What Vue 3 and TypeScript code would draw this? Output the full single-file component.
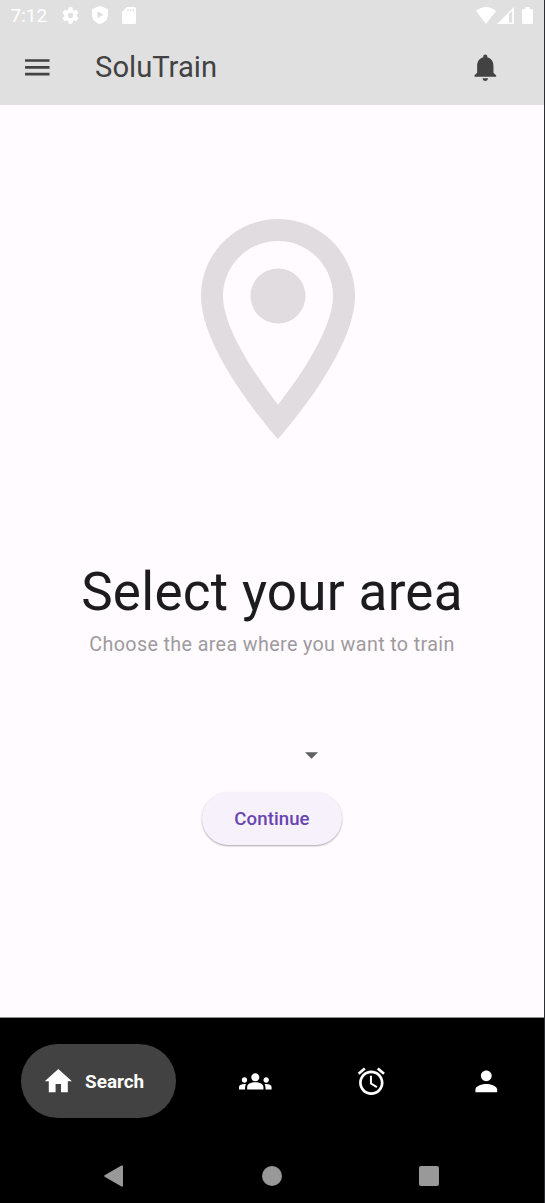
<script setup lang="ts">
interface Tab {
  label: string
  path: string
}

const tabs: Tab[] = [
  {
    label: 'Groups',
    path: 'M12 12.75c1.63 0 3.07.39 4.24.9 1.08.48 1.76 1.56 1.76 2.73V18H6v-1.61c0-1.18.68-2.26 1.76-2.73 1.17-.52 2.61-.91 4.24-.91zM4 13c1.1 0 2-.9 2-2s-.9-2-2-2-2 .9-2 2 .9 2 2 2zm1.13 1.1c-.37-.06-.74-.1-1.13-.1-.99 0-1.93.21-2.78.58C.48 14.9 0 15.62 0 16.43V18h4.500v-1.61c0-.83.23-1.61.63-2.29zM20 13c1.100 0 2-.9 2-2s-.9-2-2-2-2 .9-2 2 .9 2 2 2zm4 3.430c0-.81-.48-1.530-1.220-1.850-.85-.37-1.790-.58-2.780-.58-.39 0-.76.04-1.130.1.4.68.63 1.460.63 2.290V18H24v-1.570zM12 6c1.660 0 3 1.340 3 3s-1.340 3-3 3-3-1.340-3-3 1.340-3 3-3z',
  },
  {
    label: 'Alarm',
    path: 'M22 5.720l-4.600-3.860-1.290 1.530 4.600 3.860L22 5.720zM7.880 3.390L6.600 1.860 2 5.710l1.290 1.530 4.590-3.850zM12.500 8H11v6l4.750 2.850.75-1.230-4-2.370V8zM12 4c-4.970 0-9 4.030-9 9s4.020 9 9 9c4.970 0 9-4.030 9-9s-4.030-9-9-9zm0 16c-3.870 0-7-3.130-7-7s3.130-7 7-7 7 3.130 7 7-3.130 7-7 7z',
  },
  {
    label: 'Profile',
    path: 'M12 12c2.210 0 4-1.790 4-4s-1.790-4-4-4-4 1.790-4 4 1.790 4 4 4zm0 2c-2.670 0-8 1.340-8 4v2h16v-2c0-2.660-5.330-4-8-4z',
  },
]
</script>

<template>
  <div class="screen">
    <header class="top">
      <div class="status">
        <span class="time">7:12</span>
        <svg class="gear" viewBox="2 2 20 20"><path fill-rule="evenodd" d="M19.140 12.940c.04-.3.06-.61.06-.94 0-.32-.02-.64-.07-.94l2.030-1.580c.18-.14.23-.41.12-.61l-1.920-3.320c-.12-.22-.37-.29-.59-.22l-2.390.96c-.5-.38-1.030-.7-1.620-.94l-.36-2.540c-.04-.24-.24-.41-.48-.41h-3.840c-.24 0-.43.17-.47.41l-.36 2.540c-.59.24-1.130.57-1.620.94l-2.390-.96c-.22-.08-.47 0-.59.22L2.740 8.870c-.12.21-.08.47.12.61l2.030 1.580c-.05.3-.09.63-.09.94s.02.64.07.94l-2.030 1.580c-.18.14-.23.41-.12.61l1.920 3.320c.12.22.37.29.59.22l2.390-.96c.5.38 1.030.7 1.620.94l.36 2.540c.05.24.24.41.48.41h3.840c.24 0 .44-.17.47-.41l.36-2.540c.59-.24 1.130-.56 1.620-.94l2.390.96c.22.08.47 0 .59-.22l1.920-3.320c.12-.22.07-.47-.12-.61l-2.010-1.580zM12 15.200c-1.770 0-3.200-1.430-3.200-3.200s1.430-3.200 3.200-3.200 3.200 1.430 3.200 3.200-1.430 3.200-3.200 3.200z" /></svg>
        <svg class="shield" viewBox="0 0 16 18"><path fill-rule="evenodd" d="M8 0L16 3V8.500C16 13.500 12.500 17 8 18C3.500 17 0 13.500 0 8.500V3ZM5.500 5.200V12.200L11.500 8.700Z" /></svg>
        <svg class="card" viewBox="0 0 14 17"><path fill-rule="evenodd" d="M5 0H12.500Q14 0 14 1.500V15.500Q14 17 12.500 17H1.500Q0 17 0 15.500V5ZM5.400 2V4.500H6.500V2ZM8 2V4.500H9.100V2ZM10.600 2V4.500H11.700V2Z" /></svg>
        <div class="signals">
          <svg class="wifi" viewBox="0 0 20 17"><path d="M0 4Q10-4 20 4L10 17Z" /></svg>
          <svg class="cell" viewBox="0 0 17 17"><path fill-rule="evenodd" d="M17 0V17H0ZM12 7V15.500H15.200V3.800Z" /></svg>
          <svg class="battery" viewBox="0 0 11 17"><path d="M3.500 0H7.500V2H9.500Q11 2 11 3.500V15.500Q11 17 9.500 17H1.500Q0 17 0 15.500V3.500Q0 2 1.500 2H3.500Z" /></svg>
        </div>
      </div>
      <div class="appbar">
        <svg class="icon" viewBox="0 0 24 24"><path d="M3 18h18v-2H3v2zm0-5h18v-2H3v2zm0-7v2h18V6H3z" /></svg>
        <h1>SoluTrain</h1>
        <svg class="icon bell" viewBox="0 0 24 24"><path d="M12 22c1.100 0 2-.9 2-2h-4c0 1.100.89 2 2 2zm6-6v-5c0-3.070-1.640-5.640-4.500-6.320V4c0-.83-.67-1.500-1.500-1.500s-1.500.67-1.500 1.500v.68C7.630 5.360 6 7.920 6 11v5l-2 2v1h16v-1l-2-2z" /></svg>
      </div>
    </header>

    <main>
      <svg class="pin" viewBox="0 0 24 24">
        <path d="M12 2C8.130 2 5 5.130 5 9c0 5.250 7 13 7 13s7-7.750 7-13c0-3.870-3.130-7-7-7zM7 9c0-2.760 2.240-5 5-5s5 2.240 5 5c0 2.880-2.880 7.190-5 9.880C9.920 16.210 7 11.850 7 9z" />
        <circle cx="12" cy="9" r="2.500" />
      </svg>
      <h2>Select your area</h2>
      <p>Choose the area where you want to train</p>
      <svg class="caret" viewBox="0 0 14 7"><path d="M0 0H14L7 7Z" /></svg>
      <button type="button">Continue</button>
    </main>

    <footer>
      <nav class="tabs">
        <div class="active">
          <svg class="icon" viewBox="0 0 24 24"><path d="M10 20v-6h4v6h5v-8h3L12 3 2 12h3v8z" /></svg>
          <span>Search</span>
        </div>
        <div v-for="tab in tabs" :key="tab.label" class="tab" :aria-label="tab.label">
          <svg class="icon" viewBox="0 0 24 24"><path :d="tab.path" /></svg>
        </div>
      </nav>
      <div class="system">
        <svg class="back" viewBox="0 0 19 22"><path d="M17.500.5Q19 0 19 1.500V20.500Q19 22 17.500 21.500L.6 11.700Q-.2 11 .6 10.300Z" /></svg>
        <i class="home"></i>
        <i class="recent"></i>
      </div>
    </footer>
  </div>
</template>

<style>
body {
  margin: 0;
  background: #fffbff;
}
</style>

<style scoped>
.screen {
  box-sizing: border-box;
  width: 545px;
  height: 1203px;
  display: flex;
  flex-direction: column;
  border-right: 1px solid #2b2e33;
  background: #fffbff;
  font-family: Roboto, "Liberation Sans", sans-serif;
  overflow: hidden;
}
svg {
  display: block;
  flex: none;
}
.icon {
  width: 32.600px;
  height: 32.600px;
}
.top {
  height: 105px;
  background: #e0e0e0;
  fill: #424242;
  color: #424242;
}
.status {
  height: 30px;
  display: flex;
  align-items: center;
  padding: 0 11px 0 10.500px;
  fill: #fff;
  color: #fff;
}
.time {
  width: 51.500px;
  font-size: 19px;
  line-height: 28px;
  padding-top: 2px;
}
.gear {
  width: 17px;
  height: 17px;
}
.shield {
  width: 16px;
  height: 18px;
  margin-left: 13px;
}
.card {
  width: 14px;
  height: 17px;
  margin-left: 14px;
}
.signals {
  display: flex;
  margin-left: auto;
}
.wifi {
  width: 20px;
  height: 17px;
}
.cell {
  width: 17px;
  height: 17px;
  margin-left: 1px;
}
.battery {
  width: 11px;
  height: 17px;
  margin-left: 8px;
}
.appbar {
  height: 74px;
  display: flex;
  align-items: center;
  padding: 0 42px 0 20.500px;
}
h1 {
  margin: 0 0 0 42px;
  font-size: 29.200px;
  font-weight: 400;
  line-height: 38px;
}
.bell {
  margin-left: auto;
}
main {
  flex: 1;
  display: flex;
  flex-direction: column;
  align-items: center;
}
.pin {
  width: 264px;
  height: 264px;
  margin: 92px 0 0 11px;
  fill: #e0dce0;
}
h2 {
  margin: 97px 0 0;
  font-size: 53px;
  font-weight: 400;
  line-height: 68px;
  letter-spacing: 0.280px;
  color: #1c1b1f;
  white-space: nowrap;
}
p {
  margin: 5px 0 0;
  font-size: 19.700px;
  line-height: 28px;
  letter-spacing: 0.380px;
  color: #9e9a9e;
  white-space: nowrap;
}
.caret {
  width: 13px;
  height: 7px;
  margin: 93px 0 0 79px;
  fill: #616161;
}
button {
  width: 140px;
  height: 53px;
  margin: 33px 0 0;
  padding: 1px 0 0;
  border: 0;
  border-radius: 27px;
  background: #f6f1fb;
  box-shadow: 0 1px 2px rgba(0, 0, 0, 0.340);
  color: #6845b0;
  font: 500 18.600px/52px Roboto, "Liberation Sans", sans-serif;
  letter-spacing: 0.080px;
}
footer {
  box-sizing: border-box;
  height: 186px;
  border-top: 1px solid #8f8d90;
  background: #000;
}
.tabs {
  height: 126px;
  display: flex;
  align-items: center;
  justify-content: space-between;
  padding: 0 20px 0 21px;
  fill: #fff;
  color: #fff;
}
.active {
  box-sizing: border-box;
  width: 155px;
  height: 74px;
  display: flex;
  align-items: center;
  gap: 10.500px;
  padding-left: 21px;
  border-radius: 37px;
  background: #424242;
  font-size: 18.900px;
  line-height: 22px;
  font-weight: 700;
}
.active span {
  padding-top: 1px;
}
.tab {
  width: 75.600px;
  display: flex;
  justify-content: center;
}
.tab:nth-child(2) {
  padding-left: 2px;
}
.tab:nth-child(3) {
  padding-left: 1px;
}
.system {
  height: 59px;
  display: flex;
  align-items: center;
  box-sizing: border-box;
  padding: 4px 0 0 104px;
  fill: #999;
}
.back {
  width: 19px;
  height: 22px;
}
.home {
  width: 20px;
  height: 20px;
  margin-left: 139px;
  border-radius: 50%;
  background: #999;
}
.recent {
  width: 20px;
  height: 20px;
  margin-left: 137px;
  border-radius: 2px;
  background: #999;
}
</style>
